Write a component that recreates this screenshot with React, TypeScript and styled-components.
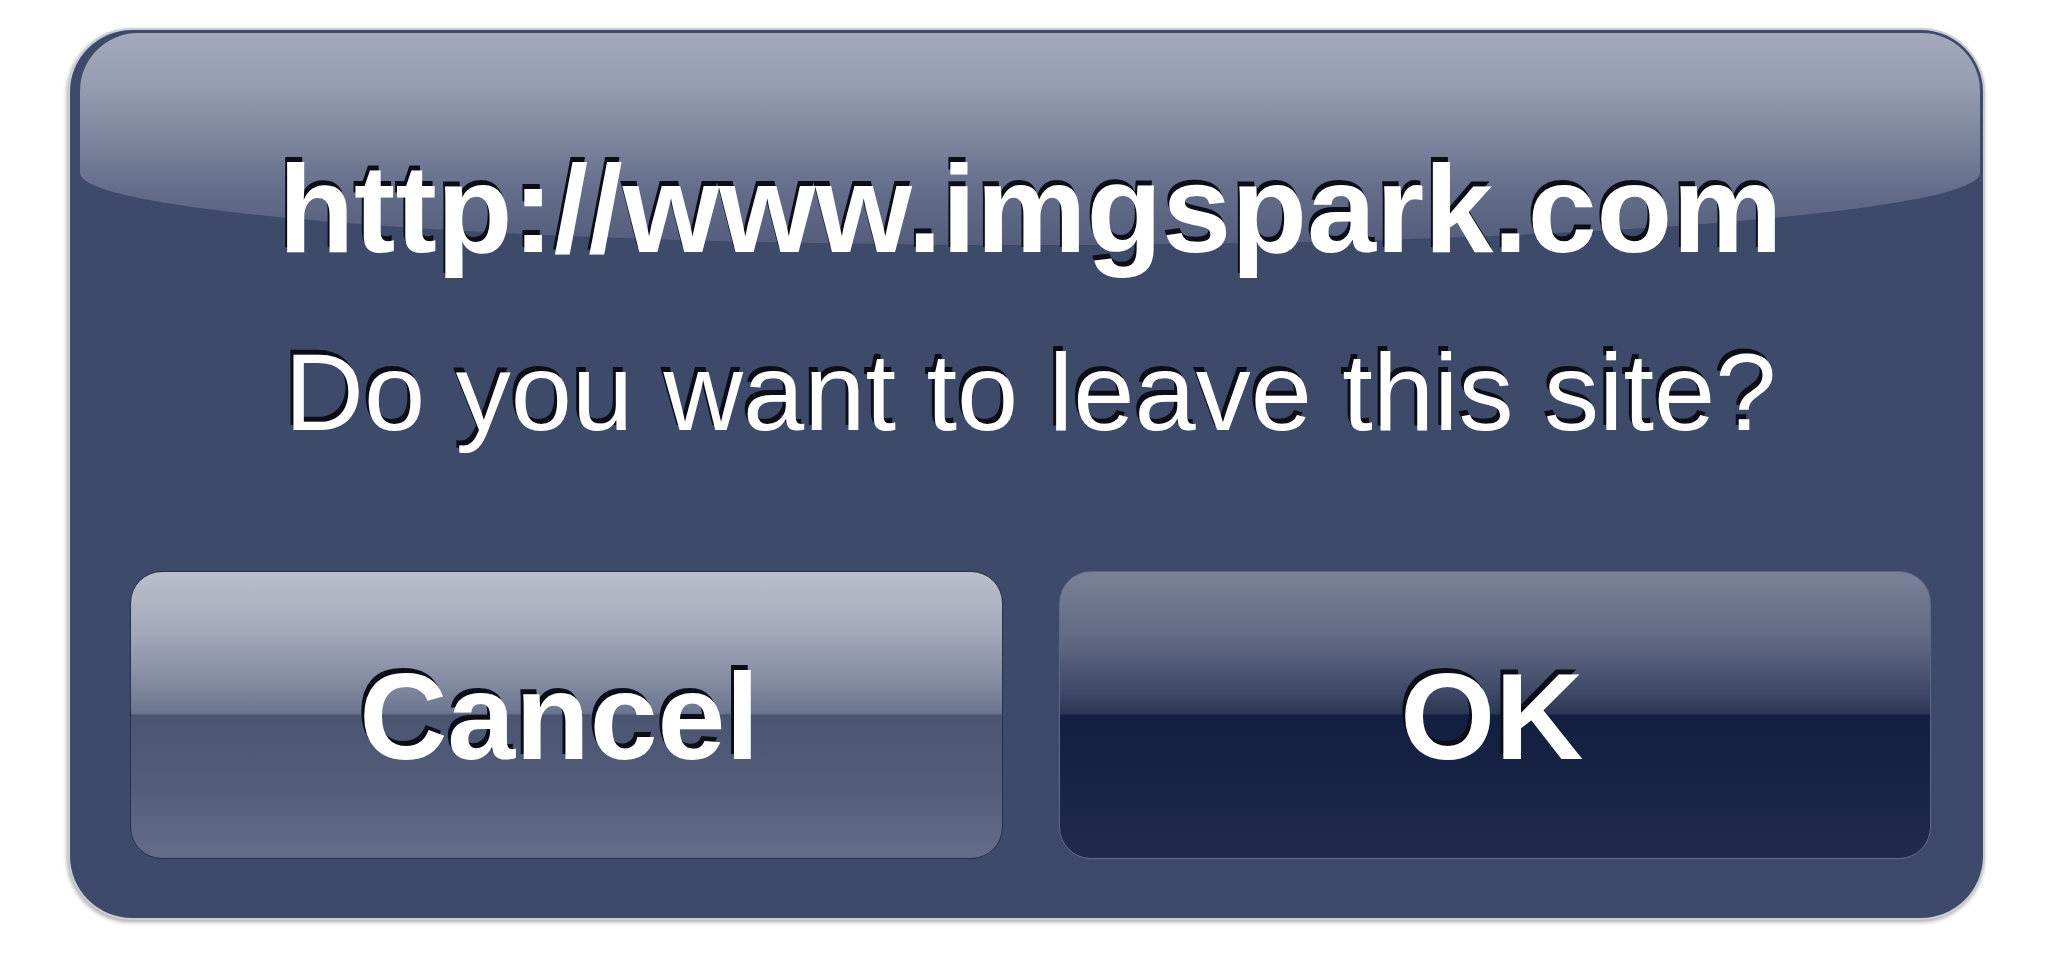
import React from "react";
import styled, { createGlobalStyle } from "styled-components";

const GlobalStyle = createGlobalStyle`
  html, body {
    margin: 0;
    padding: 0;
    background: #ffffff;
  }
  * { box-sizing: border-box; }
`;

const Page = styled.div`
  padding: 30px 0 0 70px;
  width: 2045px;
  height: 976px;
  font-family: "Liberation Sans", Arial, sans-serif;
`;

const Dialog = styled.div`
  position: relative;
  width: 1913px;
  height: 888px;
  border-radius: 62px;
  background: #3d4a6a;
  box-shadow: 0 0 0 2px #c9cdd8, -1px 2px 4px 2px rgba(0, 0, 0, 0.35);
  padding: 117px 52px 59px 60px;
  display: flex;
  flex-direction: column;
  align-items: center;
  overflow: hidden;

  &::before {
    content: "";
    position: absolute;
    top: 3px;
    left: 10px;
    right: 3px;
    height: 212px;
    border-radius: 58px 58px 50% 50% / 58px 58px 72px 72px;
    background: linear-gradient(
      to bottom,
      #a3a9bb 0%,
      #969db1 25%,
      #7d859e 50%,
      #636c89 75%,
      #545e7c 100%
    );
    pointer-events: none;
  }
`;

const Content = styled.div`
  position: relative;
  z-index: 1;
  display: flex;
  flex-direction: column;
  align-items: center;
  width: 100%;
  height: 100%;
`;

const Title = styled.div`
  font-weight: 700;
  font-size: 124px;
  line-height: 1;
  color: #ffffff;
  text-shadow: -2px -5px 0 #0b0e17;
  white-space: nowrap;
`;

const Message = styled.div`
  margin-top: 66px;
  font-weight: 400;
  font-size: 110px;
  line-height: 1;
  color: #ffffff;
  text-shadow: -3px -5px 0 #0b0e17;
  white-space: nowrap;
`;

const ButtonRow = styled.div`
  margin-top: auto;
  width: 100%;
  height: 288px;
  display: grid;
  grid-template-columns: 1fr 1fr;
  gap: 56px;
`;

const DialogButton = styled.button<{ $variant: "cancel" | "ok" }>`
  display: flex;
  align-items: center;
  justify-content: center;
  padding: 4px ${(p) => (p.$variant === "ok" ? "6px" : "14px")} 0 0;
  margin: 0;
  border-radius: 32px;
  border: 1px solid ${(p) => (p.$variant === "ok" ? "#5f6987" : "#27304c")};
  background: ${(p) =>
    p.$variant === "ok"
      ? `linear-gradient(to bottom,
          #7b8198 0%,
          #646b86 22%,
          #3f4967 42%,
          #2b3655 49.6%,
          #131f42 50%,
          #172344 70%,
          #212c4c 100%)`
      : `linear-gradient(to bottom,
          #bbbfcb 0%,
          #a5aabb 20%,
          #8a91a7 35%,
          #6c7590 49.4%,
          #4b5572 50%,
          #535d7a 75%,
          #636c88 100%)`};
  font-family: "Liberation Sans", Arial, sans-serif;
  font-weight: 700;
  font-size: 122px;
  line-height: 1;
  color: #ffffff;
  text-shadow: -3px -5px 0 #0b0e17;
  cursor: pointer;
`;

export default function App() {
  return (
    <>
      <GlobalStyle />
      <Page>
        <Dialog>
          <Content>
            <Title>http://www.imgspark.com</Title>
            <Message>Do you want to leave this site?</Message>
            <ButtonRow>
              <DialogButton $variant="cancel">Cancel</DialogButton>
              <DialogButton $variant="ok">OK</DialogButton>
            </ButtonRow>
          </Content>
        </Dialog>
      </Page>
    </>
  );
}
